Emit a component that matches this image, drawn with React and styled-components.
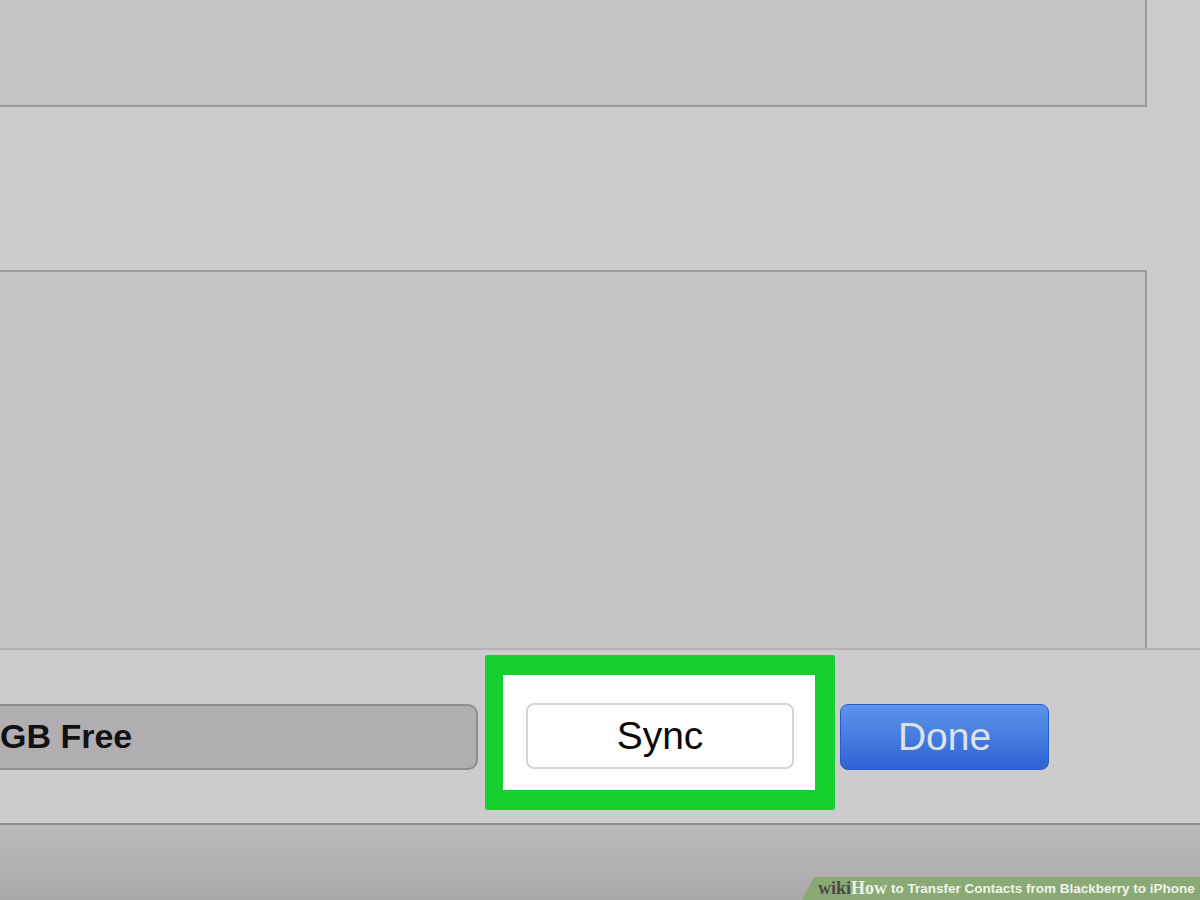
import React from 'react';
import styled, { createGlobalStyle } from 'styled-components';

const GlobalStyle = createGlobalStyle`
  html, body {
    margin: 0;
    padding: 0;
    background: #cdcbce;
  }
  body {
    font-family: 'Liberation Sans', Arial, sans-serif;
  }
`;

const Window = styled.div`
  position: relative;
  width: 1200px;
  height: 900px;
  overflow: hidden;
  background: #cdcbce;
  display: flex;
  flex-direction: column;
`;

const Panel = styled.div`
  box-sizing: border-box;
  width: 1147px;
  height: ${(p) => p.$height}px;
  margin-top: ${(p) => p.$top || 0}px;
  background: #c5c3c6;
  border-right: 2px solid #9c9a9d;
  border-top: ${(p) => (p.$borderTop ? '2px solid #9c9a9d' : 'none')};
  border-bottom: ${(p) => (p.$borderBottom ? '2px solid #9c9a9d' : 'none')};
`;

const Footer = styled.div`
  box-sizing: border-box;
  height: 177px;
  border-top: 2px solid #b4b2b5;
  border-bottom: 2px solid #8c8a8d;
  display: flex;
  align-items: center;
`;

const StorageBar = styled.div`
  box-sizing: border-box;
  width: 498px;
  height: 66px;
  margin-left: -20px;
  border: 2px solid #8f8d90;
  border-radius: 10px;
  background: #b0aeb1;
  display: flex;
  align-items: center;
  padding-left: 18px;
  font-size: 34px;
  font-weight: 700;
  color: #111;
`;

const Highlight = styled.div`
  box-sizing: border-box;
  width: 350px;
  height: 155px;
  margin-left: 7px;
  align-self: flex-start;
  margin-top: 5px;
  border-style: solid;
  border-color: #14cf2d;
  border-width: 20px 20px 20px 18px;
  border-radius: 3px;
  background: #fff;
  display: flex;
  align-items: flex-start;
  justify-content: center;
  padding: 28px 2px 0 4px;
`;

const Button = styled.div`
  box-sizing: border-box;
  height: 66px;
  border-radius: 8px;
  display: flex;
  align-items: center;
  justify-content: center;
  font-size: 39px;
`;

const SyncButton = styled(Button)`
  width: 268px;
  background: #fefefe;
  border: 2px solid #d6d5d7;
  color: #0a0a0a;
`;

const DoneButton = styled(Button)`
  width: 209px;
  margin-left: 5px;
  background: linear-gradient(#5c95ea, #2e63d3);
  border: 1px solid #2a5cc6;
  color: #dde2ea;
`;

const BottomBar = styled.div`
  flex: 1;
  background: linear-gradient(#bcbabd, #aaa8ab);
`;

const Watermark = styled.div`
  position: absolute;
  right: 0;
  bottom: 0;
  box-sizing: border-box;
  height: 23px;
  width: 398px;
  padding-left: 16px;
  background: #8ba974;
  clip-path: polygon(12px 0, 100% 0, 100% 100%, 0 100%);
  display: flex;
  align-items: center;
  white-space: nowrap;
`;

const WikiMark = styled.span`
  font-family: 'Liberation Serif', 'DejaVu Serif', serif;
  font-weight: 700;
  font-size: 18px;
  color: ${(p) => (p.$light ? '#eef0ea' : '#4a4a46')};
`;

const Caption = styled.span`
  font-size: 13.5px;
  font-weight: 700;
  color: #f1f3ee;
  margin-left: 4px;
`;

export default function App() {
  return (
    <>
      <GlobalStyle />
      <Window>
        <Panel $height={107} $borderBottom />
        <Panel $height={378} $top={163} $borderTop />
        <Footer>
          <StorageBar>GB Free</StorageBar>
          <Highlight>
            <SyncButton>Sync</SyncButton>
          </Highlight>
          <DoneButton>Done</DoneButton>
        </Footer>
        <BottomBar />
        <Watermark>
          <WikiMark>wiki</WikiMark>
          <WikiMark $light>How</WikiMark>
          <Caption>to Transfer Contacts from Blackberry to iPhone</Caption>
        </Watermark>
      </Window>
    </>
  );
}
